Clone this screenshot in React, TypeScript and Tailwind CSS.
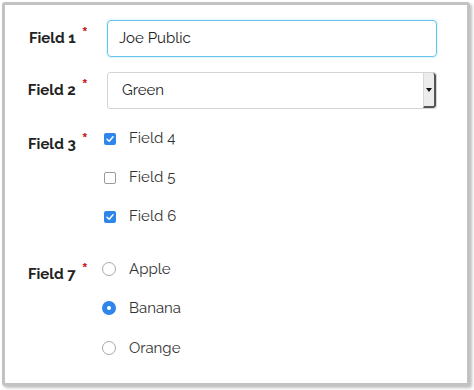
import React from 'react';

const font = { fontFamily: 'Raleway, Lato, "Liberation Sans", sans-serif' };

function Label({ text }: { text: string }) {
  return (
    <div className="w-[95px] shrink-0 flex justify-end pr-[17px]">
      <span className="text-[15px] font-bold text-[#222]">{text}</span>
      <span className="text-[#c41a1a] text-[18px] leading-none font-bold ml-[6px] mt-[-2px]">*</span>
    </div>
  );
}

function CheckBox({ checked }: { checked: boolean }) {
  return checked ? (
    <span className="block w-[12px] h-[12px] rounded-[2px] bg-[#2e86ea]">
      <svg width="12" height="12" viewBox="0 0 12 12" className="block">
        <path d="M3 6.2 L5.2 8.3 L9 3.8" fill="none" stroke="#fff" strokeWidth="1.5" strokeLinecap="round" strokeLinejoin="round" />
      </svg>
    </span>
  ) : (
    <span className="block w-[12px] h-[12px] rounded-[2px] border border-[#9a9a9a] bg-white" />
  );
}

function Radio({ checked }: { checked: boolean }) {
  return checked ? (
    <span className="flex w-[14px] h-[14px] rounded-full bg-[#2e86ea] items-center justify-center">
      <span className="block w-[4px] h-[4px] rounded-full bg-white" />
    </span>
  ) : (
    <span className="block w-[14px] h-[14px] rounded-full border border-[#a8a8a8] bg-white" />
  );
}

export default function App() {
  const checks = [
    { label: 'Field 4', checked: true },
    { label: 'Field 5', checked: false },
    { label: 'Field 6', checked: true },
  ];
  const radios = [
    { label: 'Apple', checked: false },
    { label: 'Banana', checked: true },
    { label: 'Orange', checked: false },
  ];

  return (
    <div className="w-[474px] h-[390px] bg-white pt-[2px] pl-[2px]" style={font}>
      <div className="w-[468px] h-[384px] border-[3px] border-[#c2c2c2] rounded-[3px] shadow-[2px_2px_3px_rgba(0,0,0,0.25)] bg-white pt-[15px] pl-[5px]">
        {/* Field 1 */}
        <div className="flex items-center h-[37px]">
          <Label text="Field 1" />
          <div className="ml-[2px] w-[330px] h-[37px] border border-[#66c4ec] rounded-[4px] shadow-[0_0_2px_rgba(102,196,236,0.6)] flex items-center pl-[11px] text-[15px] text-[#222]">
            Joe Public
          </div>
        </div>

        {/* Field 2 */}
        <div className="flex items-center h-[37px] mt-[15px]">
          <Label text="Field 2" />
          <div className="ml-[2px] w-[330px] h-[37px] border border-[#d4d4d4] rounded-[3px] flex items-center text-[15px] text-[#222] overflow-hidden">
            <span className="flex-1 pl-[14px]">Green</span>
            <span className="w-[13px] h-full bg-[#ececec] border-l border-[#d8d8d8] border-r-2 border-b-2 border-r-[#555] border-b-[#555] rounded-r-[3px] flex items-center justify-center">
              <svg width="6" height="4" viewBox="0 0 6 4">
                <path d="M0 0 L6 0 L3 4 Z" fill="#111" />
              </svg>
            </span>
          </div>
        </div>

        {/* Field 3 */}
        <div className="flex mt-[10px]">
          <div className="pt-[14px]">
            <Label text="Field 3" />
          </div>
          <div className="flex flex-col -ml-[2px]">
            {checks.map((c) => (
              <div key={c.label} className="flex items-center h-[39px]">
                <span className="w-[26px] pl-[1px]">
                  <CheckBox checked={c.checked} />
                </span>
                <span className="text-[15px] text-[#333]">{c.label}</span>
              </div>
            ))}
          </div>
        </div>

        {/* Field 7 */}
        <div className="flex mt-[13px]">
          <div className="pt-[14px]">
            <Label text="Field 7" />
          </div>
          <div className="flex flex-col -ml-[3px]">
            {radios.map((r) => (
              <div key={r.label} className="flex items-center h-[39.5px]">
                <span className="w-[27px]">
                  <Radio checked={r.checked} />
                </span>
                <span className="text-[15px] text-[#333]">{r.label}</span>
              </div>
            ))}
          </div>
        </div>
      </div>
    </div>
  );
}
